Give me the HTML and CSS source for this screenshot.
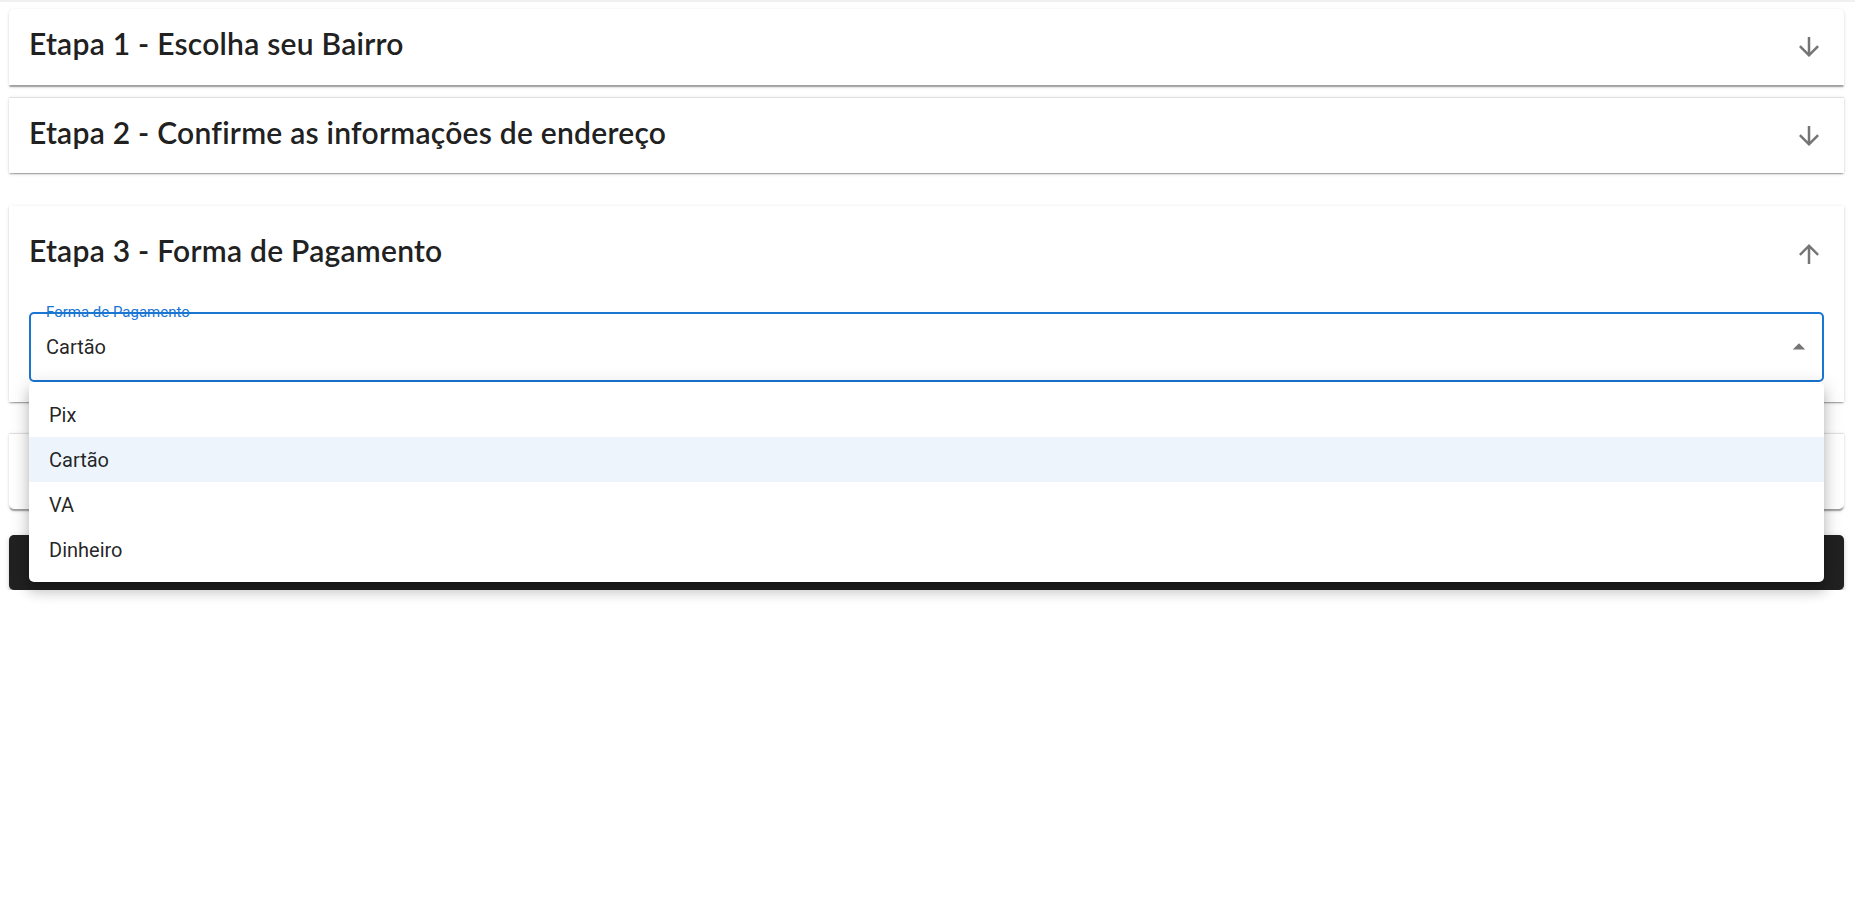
FILE: index.html
```html
<!DOCTYPE html>
<html lang="pt-BR">
<head>
<meta charset="utf-8">
<title>Pedido</title>
<link rel="stylesheet" href="styles.css">
</head>
<body>
<div class="topline"></div>
<main class="page">
  <section class="acc acc-first">
    <div class="summary">
      <h5 class="title">Etapa 1 - Escolha seu Bairro</h5>
      <svg class="icon" viewBox="0 0 24 24"><path d="M20 12l-1.41-1.41L13 16.17V4h-2v12.17l-5.58-5.59L4 12l8 8 8-8z"/></svg>
    </div>
  </section>
  <section class="acc acc-second">
    <div class="summary">
      <h5 class="title">Etapa 2 - Confirme as informações de endereço</h5>
      <svg class="icon" viewBox="0 0 24 24"><path d="M20 12l-1.41-1.41L13 16.17V4h-2v12.17l-5.58-5.59L4 12l8 8 8-8z"/></svg>
    </div>
  </section>
  <section class="acc acc-expanded">
    <div class="summary summary-expanded">
      <h5 class="title">Etapa 3 - Forma de Pagamento</h5>
      <svg class="icon" viewBox="0 0 24 24"><path d="M4 12l1.41 1.41L11 7.83V20h2V7.83l5.58 5.59L20 12l-8-8-8 8z"/></svg>
    </div>
    <div class="details">
      <div class="field">
        <span class="field-label">Forma de Pagamento</span>
        <span class="field-value">Cartão</span>
        <svg class="caret" viewBox="0 0 24 24"><path d="M7 14l5-5 5 5z"/></svg>
      </div>
    </div>
  </section>
  <section class="acc acc-last">
    <div class="summary"></div>
  </section>
  <div class="submit"></div>
</main>
<ul class="menu">
  <li class="menu-item">Pix</li>
  <li class="menu-item menu-item-selected">Cartão</li>
  <li class="menu-item">VA</li>
  <li class="menu-item">Dinheiro</li>
</ul>
</body>
</html>
```
FILE: styles.css
```css
* { box-sizing: border-box; }
html, body { margin: 0; padding: 0; background: #ffffff; }
body { font-family: Roboto, "Liberation Sans", sans-serif; color: rgba(0,0,0,0.87); }

.topline { height: 2px; background: #f0f0f0; }

.page {
  display: flex;
  flex-direction: column;
  padding: 7px 11px 0 9px;
}

.acc {
  background: #fff;
  box-shadow: 0 2.5px 1.25px -1.25px rgba(0,0,0,0.2), 0 1.25px 1.25px 0 rgba(0,0,0,0.14), 0 1.25px 3.75px 0 rgba(0,0,0,0.12);
}
.acc-first { border-radius: 5px 5px 0 0; }
.acc-second { margin-top: 12px; border-top: 1px solid rgba(0,0,0,0.12); }
.acc-expanded { margin-top: 33px; }
.acc-last { margin-top: 31px; border-top: 1px solid rgba(0,0,0,0.12); border-radius: 0 0 5px 5px; }
.acc-second .summary, .acc-last .summary { height: 75px; }

.summary {
  height: 76px;
  display: flex;
  align-items: center;
  justify-content: space-between;
  padding: 0 20px;
}
.summary-expanded { height: 96px; }

.title {
  margin: 0;
  font-family: Lato, "Open Sans", sans-serif;
  font-weight: 600;
  font-size: 30px;
  line-height: 40px;
  letter-spacing: 0.25px;
  color: #212121;
  margin-top: -8px;
}

.icon { width: 30px; height: 30px; fill: rgba(0,0,0,0.54); flex: none; }

.details { padding: 10px 20px 20px; }

.field {
  position: relative;
  height: 70px;
  border: 2px solid #1976d2;
  border-radius: 5px;
  display: flex;
  align-items: center;
  padding: 0 8px 0 15px;
}
.field-label {
  position: absolute;
  left: 15px;
  top: -9px;
  font-size: 15px;
  line-height: 15px;
  color: #1976d2;
}
.field-value {
  flex: 1;
  font-size: 20px;
  line-height: 30px;
  color: rgba(0,0,0,0.87);
}
.caret { width: 30px; height: 30px; fill: rgba(0,0,0,0.54); flex: none; }

.submit {
  margin-top: 26px;
  height: 55px;
  background: #212121;
  border-radius: 5px;
  box-shadow: 0 3.75px 1.25px -2.5px rgba(0,0,0,0.2), 0 2.5px 2.5px 0 rgba(0,0,0,0.14), 0 1.25px 6.25px 0 rgba(0,0,0,0.12);
}

.menu {
  position: absolute;
  left: 29px;
  top: 382px;
  width: 1795px;
  margin: 0;
  padding: 10px 0;
  list-style: none;
  background: #fff;
  border-radius: 5px;
  box-shadow: 0 6px 6px -4px rgba(0,0,0,0.2), 0 10px 12px 1px rgba(0,0,0,0.14), 0 4px 18px 3px rgba(0,0,0,0.12);
}
.menu-item {
  height: 45px;
  display: flex;
  align-items: center;
  padding: 0 20px;
  font-size: 20px;
  line-height: 30px;
  color: rgba(0,0,0,0.87);
}
.menu-item-selected { background: rgba(25,118,210,0.08); }
```
